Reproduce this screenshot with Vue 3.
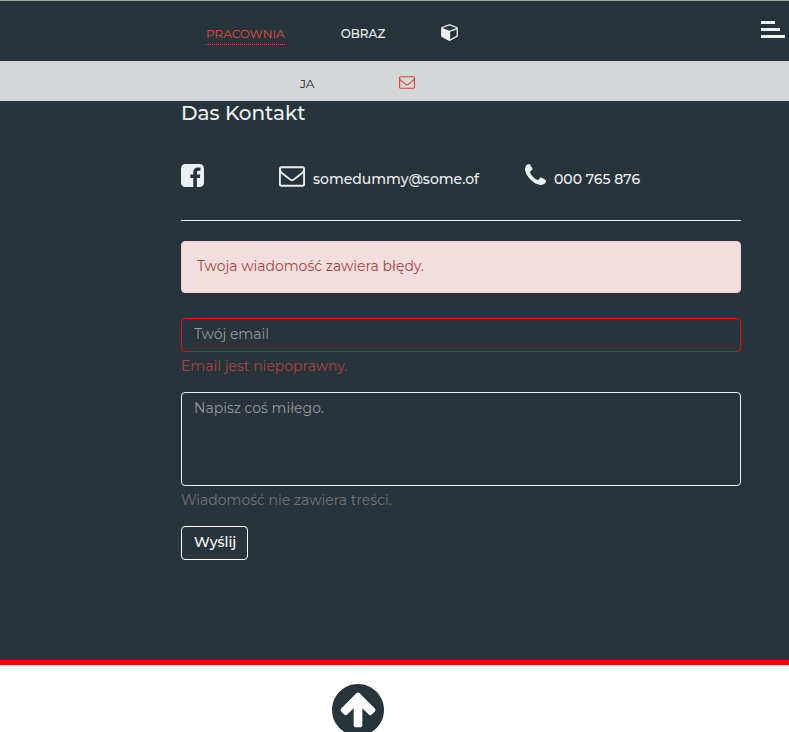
<script setup>
import { ref } from 'vue'

const email = ref('')
const message = ref('')

const envelope =
  'M1664 1504v-768q-32 36-69 66-268 206-426 338-51 43-83 67t-86.5 48.5-102.5 24.5h-2q-48 0-102.5-24.5t-86.5-48.5-83-67q-158-132-426-338-37-30-69-66v768q0 13 9.5 22.5t22.5 9.5h1472q13 0 22.5-9.5t9.5-22.5zm0-1051v-24.5l-.5-13-3-12.5-5.5-9-9-7.5-14-2.5h-1472q-13 0-22.5 9.5t-9.5 22.5q0 168 147 284 193 152 401 317 6 5 35 29.5t46 37.5 44.5 31.5 50.5 27.5 43 9h2q20 0 43-9t50.5-27.5 44.5-31.5 46-37.5 35-29.5q208-165 401-317 54-43 100.5-115.5t46.5-131.5zm128-37v1088q0 66-47 113t-113 47h-1472q-66 0-113-47t-47-113v-1088q0-66 47-113t113-47h1472q66 0 113 47t47 113z'
</script>

<template>
  <div class="page">
    <header class="topbar">
      <nav class="main-nav">
        <a href="#pracownia" class="nav-link active">PRACOWNIA</a>
        <a href="#obraz" class="nav-link strong">OBRAZ</a>
        <a href="#cube" class="cube-link" aria-label="3D">
          <svg class="cube" viewBox="0 0 1664 1792"><path d="M896 1629l640-349v-636l-640 233v752zm-64-865l698-254-698-254-698 254zm832-252v768q0 35-18 65t-49 47l-704 384q-28 16-61 16t-61-16l-704-384q-31-17-49-47t-18-65v-768q0-40 23-73t61-47l704-256q22-8 44-8t44 8l704 256q38 14 61 47t23 73z" /></svg>
        </a>
      </nav>
      <button type="button" class="menu" aria-label="Menu">
        <span class="bar short"></span>
        <span class="bar medium"></span>
        <span class="bar"></span>
      </button>
    </header>

    <nav class="subnav">
      <a href="#ja" class="sub-link">JA</a>
      <a href="#kontakt" class="sub-mail" aria-label="Kontakt">
        <svg class="mail-small" viewBox="0 256 1792 1408"><path :d="envelope" /></svg>
      </a>
    </nav>

    <main class="content">
      <h1 class="title">Das Kontakt</h1>

      <div class="contacts">
        <a href="#facebook" class="contact facebook" aria-label="Facebook">
          <svg class="fb" viewBox="128 128 1536 1536"><path d="M1376 128q119 0 203.5 84.5t84.5 203.5v960q0 119-84.5 203.5t-203.5 84.5h-188v-595h199l30-232h-229v-148q0-56 23.5-84t91.5-28l122-1v-207q-63-9-178-9-136 0-217.5 80t-81.5 226v171h-200v232h200v595h-532q-119 0-203.5-84.5t-84.5-203.5v-960q0-119 84.5-203.5t203.5-84.5h960z" /></svg>
        </a>
        <a href="mailto:somedummy@some.of" class="contact mail">
          <svg class="mail-icon" viewBox="0 256 1792 1408"><path :d="envelope" /></svg>
          <span>somedummy@some.of</span>
        </a>
        <a href="tel:000765876" class="contact phone">
          <svg class="phone-icon" viewBox="192 128 1408 1408"><path d="M1600 1240q0 27-10 70.5t-21 68.5q-21 50-122 106-94 51-186 51-27 0-52.5-3.5t-57.5-12.5-47.5-14.5-55.5-20.5-49-18q-98-35-175-83-128-79-264.5-215.5t-215.5-264.5q-48-77-83-175-3-9-18-49t-20.5-55.5-14.5-47.5-12.5-57.5-3.5-52.5q0-92 51-186 56-101 106-122 25-11 68.5-21t70.5-10q14 0 21 3 18 6 53 76 11 19 30 54t35 63.5 31 53.5q3 4 17.5 25t21.5 35.5 7 28.5q0 20-28.5 50t-62 55-62 53-28.5 46q0 9 5 22.5t8.5 20.5 14 24 11.5 19q76 137 174 235t235 174q2 1 19 11.5t24 14 20.5 8.5 22.5 5q18 0 46-28.5t53-62 55-62 50-28.5q14 0 28.5 7t35.5 21.5 25 17.5q25 15 53.5 31t63.5 35 54 30q70 35 76 53 3 7 3 21z" /></svg>
          <span>000 765 876</span>
        </a>
      </div>

      <div class="alert" role="alert">Twoja wiadomość zawiera błędy.</div>

      <form class="form" novalidate @submit.prevent>
        <div class="group">
          <input v-model="email" type="email" class="field invalid" placeholder="Twój email" aria-label="Twój email" aria-describedby="email-help" />
          <p id="email-help" class="help error">Email jest niepoprawny.</p>
        </div>
        <div class="group">
          <textarea v-model="message" class="field area" placeholder="Napisz coś miłego." aria-label="Napisz coś miłego." aria-describedby="message-help"></textarea>
          <p id="message-help" class="help">Wiadomość nie zawiera treści.</p>
        </div>
        <button type="submit" class="submit">Wyślij</button>
      </form>
    </main>

    <footer class="footer">
      <a href="#top" class="to-top" aria-label="Do góry">
        <svg class="arrow" viewBox="128 128 1536 1536"><path d="M1412 895q0-27-18-45l-362-362-91-91q-18-18-45-18t-45 18l-91 91-362 362q-18 18-18 45t18 45l91 91q18 18 45 18t45-18l189-189v502q0 26 19 45t45 19h128q26 0 45-19t19-45v-502l189 189q19 19 45 19t45-19l91-91q18-18 18-45zm252 1q0 209-103 385.5t-279.5 279.5-385.5 103-385.5-103-279.5-279.5-103-385.5 103-385.5 279.5-279.5 385.5-103 385.5 103 279.5 279.5 103 385.5z" /></svg>
      </a>
    </footer>
  </div>
</template>

<style>
body {
  margin: 0;
  background: #fff;
}
</style>

<style scoped>
.page {
  height: 100vh;
  overflow: hidden auto;
  scrollbar-width: none;
  font-family: Montserrat, Inter, "Open Sans", sans-serif;
  font-size: 14px;
  line-height: 20px;
  color: #ecf0f1;
}

.page *,
.page {
  box-sizing: border-box;
}

svg {
  display: block;
  fill: currentColor;
}

a {
  color: inherit;
  text-decoration: none;
}

.topbar {
  display: flex;
  justify-content: space-between;
  align-items: flex-start;
  height: 61px;
  padding: 20px 4px 0 206px;
  background: #28343b;
  border-top: 1px solid #a0a6a4;
}

.main-nav {
  display: flex;
  align-items: flex-start;
  gap: 56px;
  font-size: 12px;
  line-height: 16px;
}

.nav-link {
  padding-top: 5px;
}

.active {
  padding-bottom: 2px;
  color: #e74c3c;
  border-bottom: 1px dotted #e74c3c;
}

.strong {
  font-weight: 500;
}

.cube-link {
  padding-top: 2px;
}

.cube {
  width: 17px;
  height: 18px;
}

.menu {
  display: flex;
  flex-direction: column;
  gap: 4px;
  width: 24px;
  padding: 0;
  background: none;
  border: 0;
}

.bar {
  width: 24px;
  height: 3px;
  background: #ecf0f1;
}

.short {
  width: 14px;
}

.medium {
  width: 19px;
}

.subnav {
  display: flex;
  align-items: flex-start;
  gap: 85px;
  height: 40px;
  padding: 15px 0 0 300px;
  background: #d5d6d8;
  font-size: 12px;
  line-height: 16px;
}

.sub-link {
  color: #222;
}

.sub-mail {
  color: #d0473c;
}

.mail-small {
  width: 16px;
  height: 13px;
}

.content {
  padding: 0 48px 100px 181px;
  background: #28343b;
}

.title {
  margin: 0;
  font-size: 20px;
  font-weight: 500;
  line-height: 24px;
}

.contacts {
  display: flex;
  align-items: flex-start;
  height: 96px;
  padding-top: 38px;
  border-bottom: 1px solid #ecf0f1;
  font-weight: 500;
}

.contact {
  display: flex;
  align-items: flex-end;
  gap: 8px;
  height: 26px;
}

.facebook {
  width: 98px;
}

.mail {
  width: 246px;
}

.fb {
  width: 23px;
  height: 23px;
  margin-bottom: 2px;
}

.mail-icon {
  width: 26px;
  height: 21px;
  margin-bottom: 2px;
}

.phone-icon {
  width: 21px;
  height: 21px;
  margin-bottom: 4px;
}

.alert {
  margin: 20px 0 25px;
  padding: 14px 15px 16px;
  color: #a94442;
  background: #f2dede;
  border: 1px solid #ebccd1;
  border-radius: 4px;
}

.group {
  margin-bottom: 16px;
}

.field {
  display: block;
  width: 100%;
  height: 34px;
  padding: 5px 12px 7px;
  font: inherit;
  color: #ecf0f1;
  background: transparent;
  border: 1px solid #ecf0f1;
  border-radius: 4px;
  outline: none;
}

.field::placeholder {
  color: #999;
  opacity: 1;
}

.invalid {
  border-color: #f00;
}

.area {
  height: 94px;
  resize: none;
}

.help {
  margin: 4px 0 0;
  color: #737373;
}

.error {
  color: #a94442;
}

.submit {
  display: block;
  height: 34px;
  padding: 5px 11px 7px 12px;
  font: inherit;
  font-weight: 500;
  color: #fff;
  background: transparent;
  border: 1px solid #fff;
  border-radius: 4px;
}

.footer {
  padding: 19px 0 20px 332px;
  background: #fff;
  border-top: 5px solid #f00;
}

.to-top {
  display: inline-block;
  color: #28343b;
}

.arrow {
  width: 52px;
  height: 52px;
}
</style>
